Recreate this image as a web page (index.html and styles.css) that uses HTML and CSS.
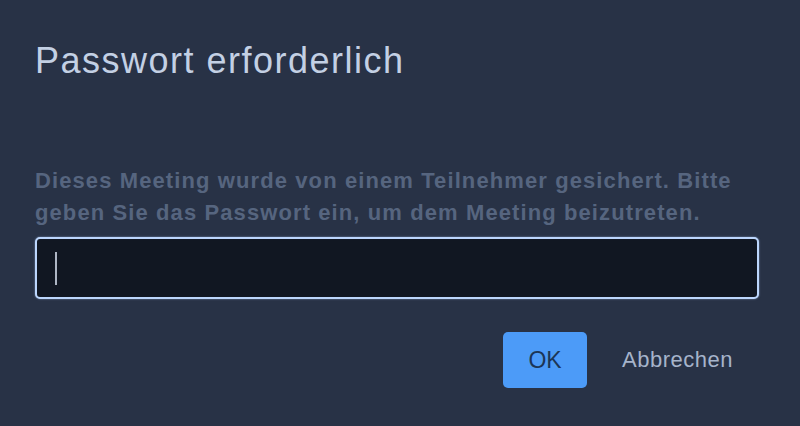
FILE: index.html
```html
<!DOCTYPE html>
<html lang="de">
<head>
    <meta charset="UTF-8">
    <title>Passwort erforderlich</title>
    <link rel="stylesheet" href="styles.css">
</head>
<body>
    <div class="dialog">
        <h1 class="title">Passwort erforderlich</h1>
        <p class="message">Dieses Meeting wurde von einem Teilnehmer gesichert. Bitte geben Sie das Passwort ein, um dem Meeting beizutreten.</p>
        <div class="field">
            <span class="caret"></span>
        </div>
        <div class="actions">
            <button class="button primary">OK</button>
            <button class="button link">Abbrechen</button>
        </div>
    </div>
</body>
</html>
```

FILE: styles.css
```css
body {
    margin: 0;
    background-color: #283246;
    font-family: "Liberation Sans", Arial, sans-serif;
}
.dialog {
    padding: 39px 41px 0 35px;
}
.title {
    margin: 0;
    font-size: 36px;
    font-weight: normal;
    letter-spacing: 1.5px;
    color: #c3d0e4;
    line-height: 44px;
}
.message {
    margin: 82px 0 0;
    font-size: 22px;
    font-weight: bold;
    letter-spacing: 1.1px;
    line-height: 32px;
    color: #56657f;
}
.field {
    box-sizing: border-box;
    margin-top: 8px;
    height: 62px;
    border: 2px solid #bcd6fd;
    border-radius: 5px;
    background-color: #111722;
    box-shadow: 0 0 2px rgba(183, 210, 251, 0.6);
    display: flex;
    align-items: center;
    padding-left: 18px;
}
.caret {
    width: 2px;
    height: 33px;
    background-color: #aeb6c4;
}
.actions {
    margin-top: 33px;
    display: flex;
    justify-content: flex-end;
    align-items: center;
    gap: 35px;
    padding-right: 26px;
}
.button {
    font-family: "Liberation Sans", Arial, sans-serif;
    border: none;
    cursor: pointer;
}
.button.primary {
    width: 84px;
    height: 56px;
    border-radius: 5px;
    background-color: #4c9bf8;
    color: #1c3656;
    font-size: 23px;
}
.button.link {
    background: none;
    padding: 0;
    font-size: 22px;
    letter-spacing: 0.5px;
    color: #a6b4cb;
}
```
